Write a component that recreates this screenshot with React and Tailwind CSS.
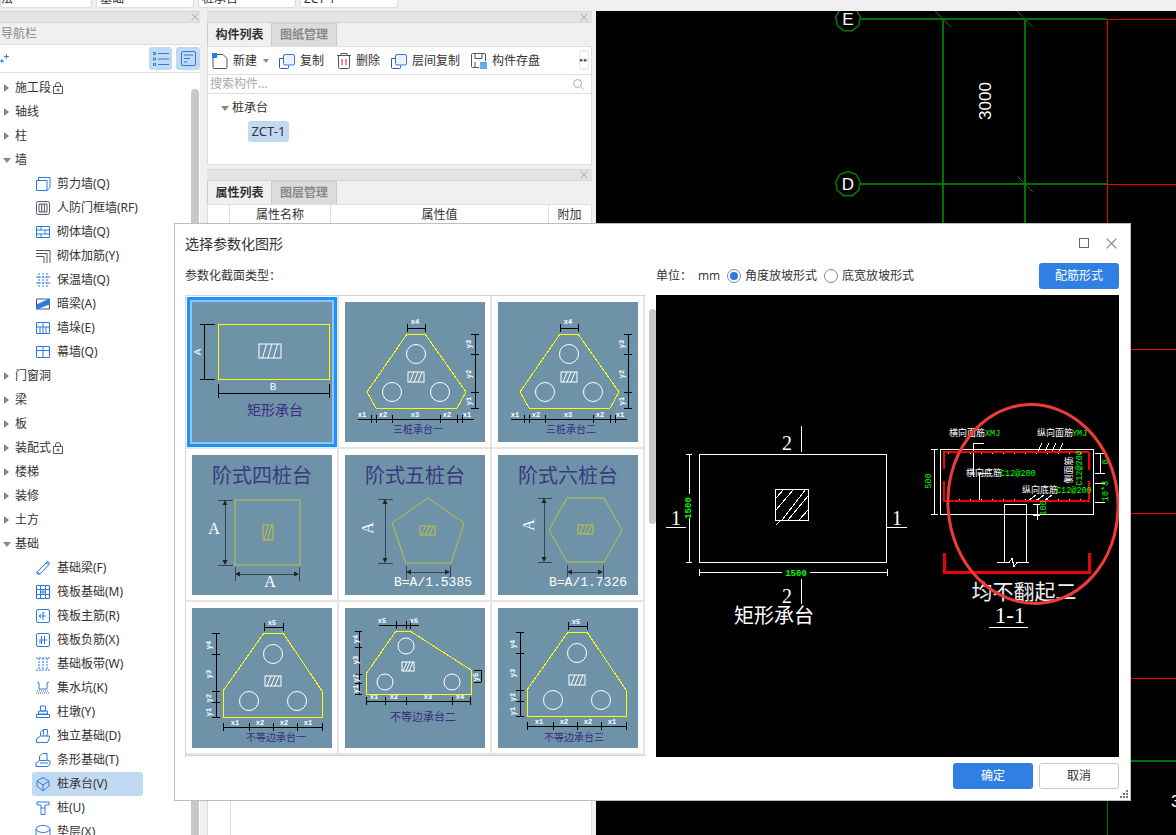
import React from 'react';

const BLUE = '#2a7be4';
const DARK = '#4a5568';

// small sidebar icons, 16x16
const icons = {
  shear: <><path d="M1.5 4.5h10.5v10H1.5z" /><path d="M3.5 4.5V1.5H15v10l-3 3" /></>,
  door: <g stroke={DARK}><rect x="1.5" y="1.5" width="13" height="13" rx="2" /><path d="M4 4h8v8H4zM6.7 4v8M9.3 4v8" /></g>,
  brick: <path d="M1.5 2.5h13v11h-13zM1.5 6h13M1.5 10h13M6 2.5V6M10 6v4M6 10v3.5" />,
  rebar: <g><path d="M1 2.5h14V15M1 5.5h11V15M1 8.5h8V15" stroke={DARK} /></g>,
  insul: <path d="M4 1v14M8 1v14M12 1v14M1 5h14M1 11h14" strokeDasharray="2 1" />,
  hidden: <><path d="M1.5 3h13v10h-13z" stroke={DARK} /><path d="M1.5 9L14.5 3v5L1.5 13z" fill={BLUE} /></>,
  pier: <path d="M1.5 2.5h13v11h-13zM8 2.5v11M1.5 7h13M5 7v6.5M11 7v6.5" />,
  curtain: <path d="M1.5 2.5h13v11h-13zM1.5 6.5h13M8 2.5v11" />,
  beam: <path d="M2 12l9-9 3 1.500-9 9.500H2zM2 12l3 2M11 3l2-1.500 1.500 2.500" />,
  raft: <path d="M1.500 1.500h13v13h-13zM1.500 5.500h13M1.500 10.500h13M5.500 1.500v13M10.500 1.500v13M7 7h2v2H7z" />,
  main: <><rect x="1.500" y="1.500" width="13" height="13" rx="1.500" /><path d="M8 4v8M5 8h6M4 8l2-2M4 8l2 2M8 4l1.500 1.500" /></>,
  neg: <><rect x="1.500" y="1.500" width="13" height="13" rx="1.500" /><path d="M6.500 4v8M9.500 4v8M4 8h8M4 10h3" /></>,
  strip: <path d="M1 2h14M1 14h14M4 2v12M12 2v12M8 2v12" strokeDasharray="2 1" />,
  pit: <><path d="M2 2l2 1v6h8V3l2-1" /><path d="M1 13h14M2 11h12" strokeDasharray="1 1" stroke={DARK} /></>,
  cap: <path d="M5.500 2h5v5h-5zM3.500 7h9v3h-9zM1.500 10.500h13v3h-13z" />,
  iso: <path d="M1.500 14.500V11l4-3V4l3-2.500h4V5l-1 3h3v2l-2 4.500zM5.500 8h7M8.500 1.500V8" />,
  stripf: <path d="M1 14.500V11l3.500-2.500V4l3-2.500H12V8l3 1v3l-2 2.500zM4.500 8.500H12M5 11h8" />,
  pile: <path d="M8 1.500L14 5v5l-6 5-6-5V5zM2 5l6 4 6-4M8 9v6" />,
  pillar: <path d="M2 2h12v3H10v9.500H6V5H2zM6 8h4" />,
  bed: <><ellipse cx="8" cy="5" rx="7" ry="3.500" /><path d="M1 5v6c0 2 3 3.500 7 3.500s7-1.500 7-3.500V5" /></>,
};

const Ico = ({ name }) => (
  <svg width="16" height="16" viewBox="0 0 16 16" fill="none" stroke={BLUE} strokeWidth="1" className="shrink-0">
    {icons[name]}
  </svg>
);

const tree = [
  { t: '施工段', lock: true },
  { t: '轴线' },
  { t: '柱' },
  { t: '墙', open: true },
  { t: '剪力墙(Q)', i: 'shear' },
  { t: '人防门框墙(RF)', i: 'door' },
  { t: '砌体墙(Q)', i: 'brick' },
  { t: '砌体加筋(Y)', i: 'rebar' },
  { t: '保温墙(Q)', i: 'insul' },
  { t: '暗梁(A)', i: 'hidden' },
  { t: '墙垛(E)', i: 'pier' },
  { t: '幕墙(Q)', i: 'curtain' },
  { t: '门窗洞' },
  { t: '梁' },
  { t: '板' },
  { t: '装配式', lock: true },
  { t: '楼梯' },
  { t: '装修' },
  { t: '土方' },
  { t: '基础', open: true },
  { t: '基础梁(F)', i: 'beam' },
  { t: '筏板基础(M)', i: 'raft' },
  { t: '筏板主筋(R)', i: 'main' },
  { t: '筏板负筋(X)', i: 'neg' },
  { t: '基础板带(W)', i: 'strip' },
  { t: '集水坑(K)', i: 'pit' },
  { t: '柱墩(Y)', i: 'cap' },
  { t: '独立基础(D)', i: 'iso' },
  { t: '条形基础(T)', i: 'stripf' },
  { t: '桩承台(V)', i: 'pile', sel: true },
  { t: '桩(U)', i: 'pillar' },
  { t: '垫层(X)', i: 'bed' },
];

const Caret = ({ open }) =>
  open ? (
    <span className="w-0 h-0 border-x-[4px] border-x-transparent border-t-[5px] border-t-[#888]" />
  ) : (
    <span className="w-0 h-0 ml-[1px] border-y-[4px] border-y-transparent border-l-[5px] border-l-[#888]" />
  );

const Lock = () => (
  <svg width="10" height="12" viewBox="0 0 10 12" fill="none" stroke="#555" className="ml-[2px]">
    <path d="M2.500 4.500V3a2.500 2.500 0 015 0v1.500M.5 4.500h9v7h-9z" />
    <circle cx="5" cy="8" r="1" />
  </svg>
);

const TreeRow = ({ row }) => {
  if (row.i) {
    return (
      <div className={`h-6 ml-[32px] mr-[57px] pl-[3px] flex items-center gap-[6px] rounded-[3px] ${row.sel ? 'bg-[#c1d9f1]' : ''}`}>
        <Ico name={row.i} />
        <span className="whitespace-nowrap">{row.t}</span>
      </div>
    );
  }
  return (
    <div className="h-6 flex items-center">
      <span className="w-[15px] pl-[3px] flex items-center"><Caret open={row.open} /></span>
      <span>{row.t}</span>
      {row.lock && <Lock />}
    </div>
  );
};

const CloseX = ({ s = 8, c = '#a8a8a8' }) => (
  <svg width={s} height={s} viewBox="0 0 9 9" stroke={c} strokeWidth="1.100"><path d="M.5.5l8 8M8.500.5l-8 8" /></svg>
);

const Strip = ({ pr = 'pr-[4px]' }) => (
  <div className={`h-3 shrink-0 bg-[#e4e4e4] border-y border-[#d4d4d4] flex items-center justify-end ${pr}`}>
    <CloseX />
  </div>
);

const Tabs = ({ a, b }) => (
  <div className="h-[23px] shrink-0 flex font-bold text-[12px]">
    <div className="w-[65px] flex items-center justify-center text-[#333] border-l border-r border-[#ccc]">{a}</div>
    <div className="w-[65px] flex items-center justify-center text-[#888] bg-[#dcdcdc] border-r border-t border-[#ccc]">{b}</div>
  </div>
);

const ToolBtn = ({ icon, label, w }) => (
  <div className={`flex items-center gap-[5px] ${w}`}>
    {icon}
    <span className="whitespace-nowrap">{label}</span>
  </div>
);

const CopyIcon = () => (
  <svg width="16" height="16" viewBox="0 0 16 16" fill="none">
    <path d="M.5 5.500h4M.5 5.500v9a1 1 0 001 1h7a1 1 0 001-1v-2" stroke={DARK} />
    <rect x="4.500" y="1.500" width="11" height="10.500" rx="1.500" stroke={BLUE} fill="#eaf2fc" />
  </svg>
);

/* ---- parameter thumbnails ---- */
const Hatch = ({ x, y, w, h, c = '#fff', n = 3 }) => (
  <g stroke={c} fill="none">
    <rect x={x} y={y} width={w} height={h} />
    {Array.from({ length: n }, (_, i) => {
      const px = x + ((i + 1) * w) / (n + 1);
      return <line key={i} x1={px - 2} y1={y + h} x2={px + 2} y2={y} />;
    })}
  </g>
);

const Small = ({ x, y, r, children }) => (
  <text
    x={x}
    y={y}
    fontSize="7"
    fontWeight="700"
    fill="#fff"
    textAnchor="middle"
    dominantBaseline="middle"
    fontFamily="'Liberation Mono',monospace"
    transform={r ? `rotate(-90 ${x} ${y})` : undefined}
  >
    {children}
  </text>
);

const Title = ({ x, y, size = 10, children }) => (
  <text x={x} y={y} fontSize={size} fill="#3a2a80" textAnchor="middle" dominantBaseline="middle" fontFamily="'Noto Sans CJK SC',sans-serif">
    {children}
  </text>
);

const SerifTitle = ({ x = 70, children }) => (
  <text x={x} y={23} fontSize="20" fill="#39397f" textAnchor="middle" dominantBaseline="middle" fontFamily="'Noto Sans CJK SC',serif">
    {children}
  </text>
);

const Label = ({ x, y, r, mono, size = 16, children }) => (
  <text
    x={x}
    y={y}
    fontSize={size}
    fill="#fff"
    textAnchor="middle"
    dominantBaseline="middle"
    fontFamily={mono ? "'Liberation Mono',monospace" : "'Liberation Serif',serif"}
    transform={r ? `rotate(-90 ${x} ${y})` : undefined}
  >
    {children}
  </text>
);

const Card = ({ children, selected }) => (
  <svg
    width="140"
    height="140"
    viewBox="0 0 140 140"
    className={`block bg-[#6e93a9] ${selected ? 'shadow-[0_0_0_2px_#8fc4f5,0_0_0_5px_#1a95ff]' : ''}`}
  >
    {children}
  </svg>
);

const Crisp = ({ children, stroke = '#000' }) => (
  <g stroke={stroke} fill="none" shapeRendering="crispEdges">{children}</g>
);

const TriCard = ({ title }) => (
  <Card>
    <polygon points="62,32 80,32 121,90 112,106 31,106 22,90" fill="none" stroke="#ffff00" shapeRendering="crispEdges" />
    {[[71, 52], [47, 90], [95, 90]].map(([x, y]) => <circle key={x} cx={x} cy={y} r="9.500" fill="none" stroke="#fff" />)}
    <Hatch x={63} y={70} w={16} h={10} />
    <Crisp>
      <path d="M62 26h18M62 22v8M80 22v8M130 32v74M126 32h8M126 52h8M126 90h8M126 106h8M13 117h116" />
      {[26, 31, 47, 95, 112, 117].map((x) => <path key={x} d={`M${x} 113v8`} />)}
    </Crisp>
    <Small x={70} y={20}>x4</Small>
    <Small x={124} y={42} r>y3</Small>
    <Small x={124} y={72} r>y2</Small>
    <Small x={124} y={99} r>y1</Small>
    <Small x={17} y={113}>x1</Small>
    <Small x={38} y={113}>x2</Small>
    <Small x={70} y={113}>x3</Small>
    <Small x={102} y={113}>x2</Small>
    <Small x={122} y={113}>x1</Small>
    <Title x={73} y={128}>{title}</Title>
  </Card>
);

const UnevenCard = ({ title, dx = 0, dy = 0, tx = 84 }) => (
  <Card>
    <g transform={`translate(${dx} ${dy})`}>
      <polygon points="72,25 91,25 130,83 130,109 31,109 31,83" fill="none" stroke="#ffff00" shapeRendering="crispEdges" />
      {[[81, 46], [57, 93], [105, 93]].map(([x, y]) => <circle key={x} cx={x} cy={y} r="9.500" fill="none" stroke="#fff" />)}
      <Hatch x={73} y={68} w={16} h={10} />
      <Crisp>
        <path d="M72 19h19M72 15v8M91 15v8M24 25v84M20 25h8M20 46h8M20 83h8M20 94h8M20 109h8M31 119h99" />
        {[31, 57, 81, 105, 130].map((x) => <path key={x} d={`M${x} 115v8`} />)}
      </Crisp>
      <Small x={80} y={15}>x5</Small>
      <Small x={17} y={37} r>y4</Small>
      <Small x={17} y={66} r>y3</Small>
      <Small x={17} y={90} r>y2</Small>
      <Small x={17} y={104} r>y1</Small>
      <Small x={43} y={115}>x1</Small>
      <Small x={68} y={115}>x2</Small>
      <Small x={92} y={115}>x2</Small>
      <Small x={116} y={115}>x1</Small>
    </g>
    <Title x={tx} y={130}>{title}</Title>
  </Card>
);

const OLIVE = '#c2c23e';
const DIM = '#36454f';
const Arrow = ({ d }) => <path d={d} fill="#222" stroke="none" />;

const cards = [
  <Card selected key="1">
    <rect x="26" y="22" width="111" height="55" fill="none" stroke="#ffff00" shapeRendering="crispEdges" />
    <Hatch x={67} y={42} w={22} h={14} />
    <Crisp>
      <path d="M12 22v55M8 22h15M8 77h15M26 91h111M26 82v14M137 82v14" />
    </Crisp>
    <Label x={6} y={50} r size={11} mono>A</Label>
    <Label x={81} y={85} size={11} mono>B</Label>
    <Title x={83} y={109} size={14}>矩形承台</Title>
  </Card>,
  <TriCard key="2" title="三桩承台一" />,
  <TriCard key="3" title="三桩承台二" />,
  <Card key="4">
    <SerifTitle>阶式四桩台</SerifTitle>
    <rect x="43" y="45" width="65" height="65" fill="none" stroke={OLIVE} />
    <Hatch x={71} y={70} w={10} h={15} c={OLIVE} n={2} />
    <Crisp stroke={DIM}>
      <path d="M33 47v61M26 45h15M26 110h15M45 119h60M43 112v14M107 112v14" />
    </Crisp>
    <Arrow d="M33 45l-2.500 5h5zM33 110l-2.500-5h5zM43 119l5-2.500v5zM107 119l-5-2.500v5z" />
    <Label x={22} y={75}>A</Label>
    <Label x={78} y={128}>A</Label>
  </Card>,
  <Card key="5">
    <SerifTitle>阶式五桩台</SerifTitle>
    <polygon points="83,43 119,68 106,108 61,108 47,68" fill="none" stroke={OLIVE} />
    <Hatch x={75} y={71} w={15} h={9} c={OLIVE} />
    <Crisp stroke={DIM}>
      <path d="M40 46v60M33 44h15M33 108h15M63 117h40M61 111v14M105 111v14" />
    </Crisp>
    <Arrow d="M40 44l-2.500 5h5zM40 108l-2.500-5h5zM61 117l5-2.500v5zM105 117l-5-2.500v5z" />
    <Label x={24} y={73} r>A</Label>
    <Label x={88} y={128} mono size={13}>B=A/1.5385</Label>
  </Card>,
  <Card key="6">
    <SerifTitle>阶式六桩台</SerifTitle>
    <polygon points="69,43 106,43 124,75 106,107 69,107 51,75" fill="none" stroke={OLIVE} />
    <Hatch x={80} y={70} w={15} h={9} c={OLIVE} />
    <Crisp stroke={DIM}>
      <path d="M46 45v60M40 43h14M40 107h14M71 117h33M69 110v14M105 110v14" />
    </Crisp>
    <Arrow d="M46 43l-2.500 5h5zM46 107l-2.500-5h5zM69 117l5-2.500v5zM105 117l-5-2.500v5z" />
    <Label x={32} y={70} r>A</Label>
    <Label x={90} y={128} mono size={13}>B=A/1.7326</Label>
  </Card>,
  <UnevenCard key="7" title="不等边承台一" />,
  <Card key="8">
    <polygon points="51,23 65,23 126,62 126,86 21,86 21,66" fill="none" stroke="#ffff00" shapeRendering="crispEdges" />
    {[[61, 38], [40, 74], [107, 74]].map(([x, y]) => <circle key={x} cx={x} cy={y} r="8" fill="none" stroke="#fff" />)}
    <Hatch x={57} y={54} w={12} h={9} />
    <Crisp>
      <path d="M34 17h40M51 13v8M61 13v8M65 13v8M14 23v63M10 23h7M10 39h7M10 66h7M10 75h7M10 86h7M129 62h7M129 74h7M136 62v12M21 93h104" />
      {[21, 40, 61, 107, 125].map((x) => <path key={x} d={`M${x} 89v8`} />)}
    </Crisp>
    <Small x={37} y={13}>x5</Small>
    <Small x={69} y={13}>x6</Small>
    <Small x={11} y={31} r>y4</Small>
    <Small x={11} y={52} r>y3</Small>
    <Small x={11} y={70} r>y2</Small>
    <Small x={11} y={81} r>y1</Small>
    <Small x={131} y={69} r>y5</Small>
    <Small x={29} y={89}>x1</Small>
    <Small x={49} y={89}>x2</Small>
    <Small x={83} y={89}>x3</Small>
    <Small x={115} y={89}>x4</Small>
    <Title x={78} y={110} size={11}>不等边承台二</Title>
  </Card>,
  <UnevenCard key="9" title="不等边承台三" dx={-2} dy={-1} tx={76} />,
];

/* ---- big preview in the dialog, in page coordinates ---- */
const Preview = () => {
  const cjk = "'Noto Sans CJK SC',serif";
  const mono = "'Liberation Mono',monospace";
  const white = (x, y, s) => <text x={x} y={y} fontSize="9" fill="#fff" fontFamily={cjk}>{s}</text>;
  const green = (x, y, s, r) => (
    <text x={x} y={y} fontSize="8.500" fill="#00ff00" fontFamily={mono} transform={r ? `rotate(-90 ${x} ${y})` : undefined} textAnchor={r ? 'middle' : 'start'}>
      {s}
    </text>
  );
  return (
    <svg width="463" height="462" viewBox="656 295 463 462" className="block bg-black shrink-0">
      <g stroke="#fff" fill="none" shapeRendering="crispEdges">
        <rect x="699.500" y="454.500" width="187" height="108" />
        <rect x="775.500" y="489.500" width="33" height="31" />
        <path d="M781 520l-5 5M776 510l18-21M776 498l8-9M788 520l20-24M799 520l9-10M782 520l24-31" />
        <path d="M801.500 426v26M801.500 579v25M666 527.500h20M887 527.500h20M689.500 454v40M689.500 518v44M686 454h6M686 562h6" />
        <path d="M699 572.500h83M810 572.500h77M699 569v7M887 569v7" />
      </g>
      <g fill="#fff" fontFamily="'Liberation Serif',serif" fontSize="20" textAnchor="middle">
        <text x="787" y="450">2</text>
        <text x="787" y="603">2</text>
        <text x="676" y="525">1</text>
        <text x="897" y="525">1</text>
      </g>
      <text x="689" y="508" fontSize="9" fontWeight="700" fill="#00ff00" fontFamily={mono} textAnchor="middle" transform="rotate(-90 689 508)" dominantBaseline="middle">1500</text>
      <text x="796" y="576" fontSize="9" fontWeight="700" fill="#00ff00" fontFamily={mono} textAnchor="middle">1500</text>
      <text x="774" y="623" fontSize="20" fill="#fff" fontFamily={cjk} textAnchor="middle">矩形承台</text>

      {/* section 1-1 */}
      <g stroke="#fff" fill="none" shapeRendering="crispEdges">
        <rect x="940.500" y="449.500" width="153" height="65" />
        <path d="M1004.500 504v58M1026.500 504v58M1004 504.500h22M997 562.500h12l3-4 2 8 3-4h12M934.500 449v65M931 449h7M931 514h7" />
        <path d="M973.500 477v-34h10M979 501v-28h12M1095 453h10M1095 473h10M1100 453v20M1095 483h10M1095 502h10M1037 453l5-10M1044 453l5-10M1051 453l5-10M1058 453l5-10M1028 501l8-6M1036 501l8-6M1044 501l8-6" />
        <path d="M1037 504v16M1033 504h7M1033 515h7" />
      </g>
      <path d="M944 481v20h145v-20M1089 452v18M944 469v-17h145" fill="none" stroke="#f00000" strokeWidth="2.500" shapeRendering="crispEdges" />
      <path d="M948 453.500h140M948 499.500h140" stroke="#ffff00" strokeDasharray="1 10" shapeRendering="crispEdges" />
      <path d="M944.500 553v19.500h145V553" fill="none" stroke="#f00000" strokeWidth="2.500" shapeRendering="crispEdges" />
      {white(949, 436, '横向面筋')}
      {green(985, 436, 'XMJ')}
      {white(1037, 436, '纵向面筋')}
      {green(1072, 436, 'YMJ')}
      {white(966, 476, '横向底筋')}
      {green(1000, 476, 'C12@200')}
      {white(1022, 493, '纵向底筋')}
      {green(1056, 493, 'C12@200')}
      <text x="1072" y="470" fontSize="9" fill="#fff" fontFamily={cjk} textAnchor="middle" transform="rotate(-90 1072 470)">侧面筋</text>
      {green(1082, 468, 'C12@200', true)}
      {green(1046, 508, '100', true)}
      {green(931, 481, '500', true)}
      {green(1108, 462, '0', true)}
      {green(1108, 491, '10*d', true)}
      <text x="1024" y="599" fontSize="21" fill="#f0f0f0" fontFamily={cjk} textAnchor="middle">均不翻起二</text>
      <text x="1010" y="623" fontSize="23" fill="#fff" fontFamily="'Liberation Serif',serif" textAnchor="middle">1-1</text>
      <path d="M989 627.500h39" stroke="#fff" shapeRendering="crispEdges" />
      <ellipse cx="1033" cy="504" rx="85" ry="99.500" fill="none" stroke="#ee3a3a" strokeWidth="3" transform="rotate(-4 1033 504)" />
    </svg>
  );
};

const Radio = ({ on, label }) => (
  <div className="flex items-center gap-[4px]">
    <span className="w-[14px] h-[14px] rounded-full border border-[#888] bg-white flex items-center justify-center">
      {on && <span className="w-[8px] h-[8px] rounded-full bg-[#2a7be4]" />}
    </span>
    <span>{label}</span>
  </div>
);

const Dialog = () => (
  <div className="absolute left-[174px] top-[223px] w-[957px] h-[578px] bg-white border border-[#bdbdbd] flex flex-col text-[12px] text-[#333]">
    <div className="h-[38px] shrink-0 flex items-center pl-[10px] pr-[13px] text-[14px]">
      <span className="flex-1">选择参数化图形</span>
      <span className="w-[10px] h-[10px] border border-[#666] mr-[17px]" />
      <CloseX s={11} c="#888" />
    </div>
    <div className="h-[28px] mb-[5px] shrink-0 flex items-center pl-[10px] pr-[11px]">
      <span className="w-[471px]">参数化截面类型：</span>
      <span className="w-[42px]">单位：</span>
      <span className="w-[29px] font-['Open_Sans']">mm</span>
      <div className="flex items-center gap-[7px] flex-1">
        <Radio on label="角度放坡形式" />
        <Radio label="底宽放坡形式" />
      </div>
      <button className="w-20 h-[26px] rounded-[3px] bg-[#2f80e2] text-white">配筋形式</button>
    </div>
    <div className="h-[462px] shrink-0 flex pl-[10px]">
      <div className="w-[461px] h-full overflow-hidden border-l border-t border-[#d5d5d5] shrink-0">
        <div className="grid grid-cols-[repeat(3,153px)] auto-rows-[153px]">
          {cards.map((c, i) => (
            <div key={i} className="border-r-2 border-b-2 border-[#e4e4e4] flex items-center justify-center">{c}</div>
          ))}
        </div>
        <div className="border-t border-[#d5d5d5]" />
      </div>
      <div className="w-[10px] shrink-0 pl-[3px] pt-[14px]">
        <div className="w-[7px] h-[215px] rounded bg-[#c8c8c8]" />
      </div>
      <Preview />
    </div>
    <div className="flex-1 relative flex justify-end items-start gap-[6px] pt-[6px] pr-[11px]">
      <button className="w-20 h-[26px] rounded-[3px] bg-[#2f80e2] text-white">确定</button>
      <button className="w-20 h-[26px] rounded-[3px] bg-white border border-[#c8c8c8] text-[#333]">取消</button>
      <svg width="8" height="8" viewBox="0 0 8 8" fill="#777" className="absolute right-[2px] bottom-[2px]">
        <path d="M6 0h2v2H6zM3 3h2v2H3zM6 3h2v2H6zM0 6h2v2H0zM3 6h2v2H3zM6 6h2v2H6z" />
      </svg>
    </div>
  </div>
);

const Octagon = ({ cx, cy, label }) => {
  const pts = Array.from({ length: 9 }, (_, i) => {
    const a = (i * 2 * Math.PI) / 9 - Math.PI / 2;
    return `${(cx + 12.500 * Math.cos(a)).toFixed(1)},${(cy + 12.500 * Math.sin(a)).toFixed(1)}`;
  }).join(' ');
  return (
    <>
      <polygon points={pts} fill="#000" stroke="#007a00" strokeWidth="1.500" />
      <text x={cx} y={cy + 6} fontSize="17" fill="#fff" textAnchor="middle" fontFamily="'Liberation Sans',sans-serif">{label}</text>
    </>
  );
};

const Canvas = () => (
  <svg width="580" height="824" viewBox="596 11 580 824" className="block bg-black shrink-0">
    <g stroke="#007000" strokeWidth="2" fill="none" shapeRendering="crispEdges">
      <path d="M860 19h247M860 184h247M943 19v220M1025 19v220M1131 761h45" />
      <path d="M1107 800v35" strokeWidth="1" />
    </g>
    <path d="M935 11l16 16M1017 11l16 16M1017 176l16 16" stroke="#007000" fill="none" />
    <g stroke="#f00000" strokeWidth="1" fill="none" shapeRendering="crispEdges">
      <path d="M1107.500 19v205M1107 19.500h69M1107 184.500h69M1131 349.500h45M1131 513.500h45M1131 678.500h45" />
    </g>
    <Octagon cx={848} cy={19} label="E" />
    <Octagon cx={848} cy={184} label="D" />
    <text x="991" y="101" fontSize="17" fill="#fff" textAnchor="middle" fontFamily="'Liberation Sans',sans-serif" transform="rotate(-90 991 101)">3000</text>
    <text x="1171" y="807" fontSize="17" fill="#fff" fontFamily="'Liberation Sans',sans-serif">3</text>
  </svg>
);

export default function App() {
  return (
    <div className="relative w-[1176px] h-[835px] overflow-hidden bg-[#f0f0f0] text-[12px] text-[#333] font-['Noto_Sans','Noto_Sans_CJK_SC',sans-serif]">
      {/* cut off combos on top */}
      <div className="h-[11px] flex gap-[4px] text-[12px]">
        {[['w-[92px]', '法'], ['w-[98px] pl-[3px]', '基础'], ['w-[98px] pl-[3px]', '桩承台'], ['w-[98px] pl-[3px]', 'ZCT-1']].map(([w, t]) => (
          <div key={t} className={`${w} h-[8px] overflow-hidden bg-white rounded-b-[3px] border border-t-0 border-[#ddd]`}>
            <div className="-mt-[9px] leading-[16px]">{t}</div>
          </div>
        ))}
      </div>

      <div className="flex h-[824px]">
        {/* navigation */}
        <div className="relative w-[200px] shrink-0 bg-white flex flex-col overflow-hidden">
          <Strip pr="pr-[1px]" />
          <div className="h-[22px] shrink-0 bg-[#f0f0f0] border-b border-[#ddd] flex items-center pl-[1px] text-[#888]">导航栏</div>
          <div className="h-[28px] shrink-0 border-b border-[#ddd] flex items-center">
            <svg width="10" height="10" viewBox="0 0 10 10" stroke={BLUE} fill="none"><path d="M6.500 0v5M4 2.500h5M2 5v4M0 7h4" /></svg>
            <div className="ml-[139px] w-6 h-[23px] rounded-[3px] bg-[#c1d9f1] flex items-center justify-center">
              <svg width="16" height="14" viewBox="0 0 16 14" stroke={BLUE} fill="none"><path d="M5 1.500h11M5 7h11M5 12.500h11M.5.500h2v2h-2zM.5 6h2v2h-2zM.5 11.500h2v2h-2z" /></svg>
            </div>
            <div className="ml-[4px] w-6 h-[23px] rounded-[3px] bg-[#c1d9f1] flex items-center justify-center">
              <svg width="15" height="15" viewBox="0 0 15 15" stroke={BLUE} fill="none"><rect x=".5" y=".5" width="14" height="14" rx="1.500" /><path d="M3 4h9M3 7.500h6M3 11h3" /></svg>
            </div>
          </div>
          <div className="pt-[3px]">
            {tree.map((r) => <TreeRow key={r.t} row={r} />)}
          </div>
          <div className="absolute left-[191px] top-[78px] bottom-0 w-2 rounded-t bg-[#c8c8c8]" />
        </div>

        {/* component list + properties */}
        <div className="ml-[7px] w-[385px] shrink-0 flex flex-col">
          <Strip />
          <Tabs a="构件列表" b="图纸管理" />
          <div className="h-[28px] shrink-0 bg-white border-x border-t border-[#ddd] flex items-center pl-[4px] relative">
            <ToolBtn w="w-[67px]" label={<>新建<span className="inline-block ml-[6px] align-middle w-0 h-0 border-x-[3px] border-x-transparent border-t-[4px] border-t-[#888]" /></>} icon={
              <svg width="16" height="16" viewBox="0 0 16 16" fill="none"><path d="M3 1.500h8l4 4v9a1 1 0 01-1 1H2a1 1 0 01-1-1V5" stroke={DARK} /><path d="M0 0h5v5H0z" fill={BLUE} /></svg>
            } />
            <ToolBtn w="w-[58px]" label="复制" icon={<CopyIcon />} />
            <ToolBtn w="w-[54px]" label="删除" icon={
              <svg width="14" height="16" viewBox="0 0 14 16" fill="none" stroke={DARK}><path d="M0 2.500h14M4 2.500V.5h6v2M1.500 2.500v12a1 1 0 001 1h9a1 1 0 001-1v-12" /><path d="M5 6v6M9 6v6" stroke="#e02020" /></svg>
            } />
            <ToolBtn w="w-[80px]" label="层间复制" icon={<CopyIcon />} />
            <ToolBtn label="构件存盘" icon={
              <svg width="16" height="16" viewBox="0 0 16 16" fill="none"><path d="M1.500.5h12a1 1 0 011 1V8M1.500.5a1 1 0 00-1 1v12a1 1 0 001 1H8M4 .5v5h7v-5M4 14.500V9" stroke={DARK} /><rect x="9" y="9" width="7" height="7" fill="#6aa8ee" /></svg>
            } />
            <div className="absolute right-[2px] top-[3px] w-[10px] h-[20px] border border-[#e4e4e4] rounded-[3px] flex items-center justify-center text-[7px] text-[#555]">▸▸</div>
          </div>
          <div className="h-[19px] shrink-0 bg-white border-x border-t border-[#ddd] flex items-center justify-between pl-[2px] pr-[7px] text-[#aaa]">
            <span>搜索构件...</span>
            <svg width="11" height="11" viewBox="0 0 11 11" fill="none" stroke="#aaa"><circle cx="4.500" cy="4.500" r="4" /><path d="M7.500 7.500l3 3" /></svg>
          </div>
          <div className="h-[72px] shrink-0 bg-white border border-[#ddd] pl-[13px] pt-[2px]">
            <div className="h-[24px] flex items-center gap-[3px]">
              <Caret open />
              <span>桩承台</span>
            </div>
            <div className="ml-[27px] mt-[1px] w-[41px] h-[21px] rounded-[3px] bg-[#c1d9f1] flex items-center justify-center text-[13px]">ZCT-1</div>
          </div>
          <div className="h-[4px] shrink-0" />
          <Strip />
          <Tabs a="属性列表" b="图层管理" />
          <div className="flex-1 bg-white border-x border-t border-[#ddd] flex flex-col">
            <div className="h-[20px] shrink-0 flex border-b border-[#ddd]">
              <div className="w-[22px] border-r border-[#ddd]" />
              <div className="w-[101px] border-r border-[#ddd] flex items-center justify-center">属性名称</div>
              <div className="w-[218px] border-r border-[#ddd] flex items-center justify-center">属性值</div>
              <div className="w-[41px] flex items-center justify-center">附加</div>
            </div>
            <div className="flex-1 w-[23px] border-r border-[#ddd]" />
          </div>
        </div>

        <div className="ml-[4px]"><Canvas /></div>
      </div>

      <Dialog />
    </div>
  );
}
